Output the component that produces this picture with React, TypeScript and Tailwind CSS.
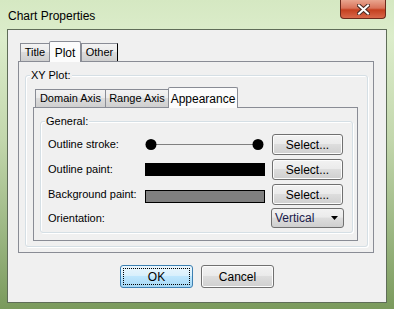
import React from 'react';

const font = { fontFamily: '"Liberation Sans", Arial, sans-serif' };

function Tab({ label, width, selected }: { label: string; width: number; selected?: boolean }) {
  if (selected) {
    return (
      <div
        className="relative z-10 -mb-px flex h-[21px] items-start justify-center rounded-t-[2px] border border-b-0 border-[#898c95] bg-[#fcfcfc] pt-[2px] text-[12px] text-black"
        style={{ width }}
      >
        {label}
      </div>
    );
  }
  return (
    <div
      className="flex h-[18px] items-center justify-center border border-b-0 border-l-[#898c95] border-r-0 border-t-[#898c95] bg-[linear-gradient(180deg,#f3f3f3_0%,#ebebeb_45%,#dcdcdc_50%,#cfcfcf_100%)] text-[11px] text-black last:border-r"
      style={{ width }}
    >
      {label}
    </div>
  );
}

function WinButton({ label, w, h, focused }: { label: string; w: number; h: number; focused?: boolean }) {
  if (focused) {
    return (
      <div
        className="flex items-center justify-center rounded-[3px] border border-[#3c7fb1] bg-[linear-gradient(180deg,#eaf6fd_0%,#d9f0fc_45%,#bee6fd_50%,#a7d9f5_100%)] p-[2px]"
        style={{ width: w, height: h }}
      >
        <div className="flex h-full w-full items-center justify-center border border-dotted border-black text-[12px] text-black">
          {label}
        </div>
      </div>
    );
  }
  return (
    <div
      className="flex items-center justify-center rounded-[3px] border border-[#707070] bg-[linear-gradient(180deg,#f2f2f2_0%,#ebebeb_45%,#dddddd_50%,#cfcfcf_100%)] text-[12px] text-black shadow-[inset_0_0_0_1px_#fcfcfc]"
      style={{ width: w, height: h }}
    >
      {label}
    </div>
  );
}

function Group({ title, className, children }: { title: string; className: string; children?: React.ReactNode }) {
  return (
    <div className={`relative rounded-[3px] border border-[#d5dfe5] shadow-[inset_1px_1px_0_#ffffff,1px_1px_0_#ffffff] ${className}`}>
      <span className="absolute -top-[8px] left-[4px] bg-[#f0f0f0] px-px text-[11px] leading-[14px] text-black">{title}</span>
      {children}
    </div>
  );
}

export default function App() {
  return (
    <div
      className="relative h-[309px] w-[394px] overflow-hidden bg-[linear-gradient(180deg,#d5e8c2_0%,#dcedcb_12%,#c3d7ad_45%,#9cb783_75%,#7a9a5c_100%)]"
      style={font}
    >
      {/* title bar */}
      <div className="flex h-[29px] items-start justify-between">
        <span className="pl-[8px] pt-[7px] text-[12px] text-black">Chart Properties</span>
        <div className="mr-[8px] flex h-[19px] w-[46px] items-center justify-center rounded-b-[4px] border border-t-0 border-[#6b2a1c] bg-[linear-gradient(180deg,#e9a58f_0%,#d9735a_45%,#c4401f_55%,#d8684a_100%)]">
          <svg width="13" height="11" viewBox="0 0 13 11">
            <path d="M2 1.5 L11 9.5 M11 1.5 L2 9.5" stroke="#4a2a22" strokeWidth="4" strokeLinecap="square" />
            <path d="M2 1.5 L11 9.5 M11 1.5 L2 9.5" stroke="#ffffff" strokeWidth="2" strokeLinecap="square" />
          </svg>
        </div>
      </div>

      {/* client area */}
      <div className="ml-[7px] flex h-[274px] w-[380px] flex-col border border-[#5f6d58] bg-[#f0f0f0] pl-[10px] pt-[11px]">
        <div className="flex items-end pl-[2px]">
          <Tab label="Title" width={29} />
          <Tab label="Plot" width={32} selected />
          <Tab label="Other" width={37} />
        </div>
        <div className="h-[192px] w-[356px] border border-[#898c95] bg-[#f0f0f0] pl-[6px] pt-[13px]">
          <Group title="XY Plot:" className="h-[172px] w-[343px] pl-[7px] pt-[11px]">
            <div className="flex items-end pl-[2px]">
              <Tab label="Domain Axis" width={70} />
              <Tab label="Range Axis" width={63} />
              <Tab label="Appearance" width={70} selected />
            </div>
            <div className="h-[134px] w-[325px] border border-[#898c95] bg-[#f0f0f0] pl-[6px] pt-[13px]">
              <Group title="General:" className="h-[112px] w-[313px] pl-[7px] pt-[12px] text-[11px] text-black">
                <div className="flex h-[21px] items-center">
                  <span className="w-[97px]">Outline stroke:</span>
                  <svg width="120" height="21" viewBox="0 0 120 21" className="block">
                    <line x1="6" y1="10.5" x2="113" y2="10.5" stroke="#808080" strokeWidth="1" />
                    <circle cx="6" cy="10.5" r="5.5" fill="#000" />
                    <circle cx="113" cy="10.5" r="5.5" fill="#000" />
                  </svg>
                  <div className="ml-[7px]">
                    <WinButton label="Select..." w={71} h={21} />
                  </div>
                </div>
                <div className="mt-[4px] flex h-[21px] items-center">
                  <span className="w-[97px]">Outline paint:</span>
                  <div className="h-[13px] w-[120px] bg-black" />
                  <div className="ml-[7px]">
                    <WinButton label="Select..." w={71} h={21} />
                  </div>
                </div>
                <div className="mt-[4px] flex h-[21px] items-center">
                  <span className="w-[97px]">Background paint:</span>
                  <div className="mt-[3px] h-[13px] w-[120px] border border-black bg-[#808080]" />
                  <div className="ml-[7px]">
                    <WinButton label="Select..." w={71} h={21} />
                  </div>
                </div>
                <div className="mt-[3px] flex h-[20px] items-center">
                  <span className="w-[223px]">Orientation:</span>
                  <div className="flex h-[20px] w-[73px] items-center justify-between rounded-[3px] border border-[#707070] bg-[linear-gradient(180deg,#f2f2f2_0%,#ebebeb_45%,#dddddd_50%,#cfcfcf_100%)] pl-[3px] pr-[5px] text-[12px] text-[#1a1a4a]">
                    <span>Vertical</span>
                    <svg width="7" height="4" viewBox="0 0 7 4">
                      <path d="M0 0 H7 L3.5 4 Z" fill="#000" />
                    </svg>
                  </div>
                </div>
              </Group>
            </div>
          </Group>
        </div>
        <div className="mt-[12px] flex justify-center gap-[8px] pr-[10px]">
          <WinButton label="OK" w={73} h={23} focused />
          <WinButton label="Cancel" w={73} h={23} />
        </div>
      </div>
    </div>
  );
}
